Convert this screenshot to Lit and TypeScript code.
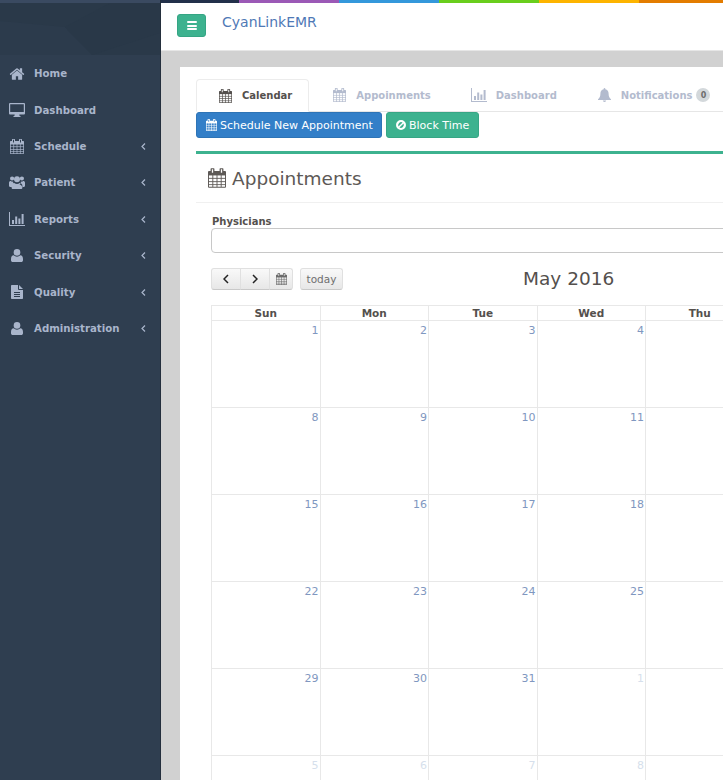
import { LitElement, html, css, svg } from "lit";
import { customElement } from "lit/decorators.js";

const ic = (vb: string, body: unknown, cls = "") =>
  html`<svg class="ic ${cls}" viewBox="${vb}" aria-hidden="true">${body}</svg>`;

const calendar = (cls = "") =>
  ic(
    "0 0 28 30",
    svg`<path d="M5 0h4a1 1 0 0 1 1 1v3h8V1a1 1 0 0 1 1-1h4a1 1 0 0 1 1 1v3h2.500A1.500 1.500 0 0 1 28 5.500v23a1.500 1.500 0 0 1-1.500 1.500h-25A1.500 1.500 0 0 1 0 28.500v-23A1.500 1.500 0 0 1 1.500 4H4V1a1 1 0 0 1 1-1zM6 1.500V7h2V1.500zm14 0V7h2V1.500z" fill-rule="evenodd" />
    <g fill="#fff" class="cells"><rect x="1.500" y="11" width="5.300" height="3.800"/><rect x="8.200" y="11" width="5.100" height="3.800"/><rect x="14.700" y="11" width="5.100" height="3.800"/><rect x="21.200" y="11" width="5.300" height="3.800"/><rect x="1.500" y="16.200" width="5.300" height="3.800"/><rect x="8.200" y="16.200" width="5.100" height="3.800"/><rect x="14.700" y="16.200" width="5.100" height="3.800"/><rect x="21.200" y="16.200" width="5.300" height="3.800"/><rect x="1.500" y="21.400" width="5.300" height="3.300"/><rect x="8.200" y="21.400" width="5.100" height="3.300"/><rect x="14.700" y="21.400" width="5.100" height="3.300"/><rect x="21.200" y="21.400" width="5.300" height="3.300"/><rect x="1.500" y="26" width="5.300" height="2.600"/><rect x="8.200" y="26" width="5.100" height="2.600"/><rect x="14.700" y="26" width="5.100" height="2.600"/><rect x="21.200" y="26" width="5.300" height="2.600"/></g>`,
    cls
  );
const chart = (cls = "") =>
  ic(
    "0 0 16 14",
    svg`<path d="M0 0h1v13h15v1H0zM3 8h2v4H3zM6.200 4.500h2V12h-2zM9.400 6.500h2V12h-2zM12.600 2h2v10h-2z"/>`,
    cls
  );
const home = () =>
  ic(
    "0 0 1792 1792",
    svg`<path d="M1472 992v480q0 26-19 45t-45 19h-384v-384H768v384H384q-26 0-45-19t-19-45V992q0-1 .5-3t.5-3l575-474 575 474q1 2 1 6zm223-69l-62 74q-8 9-21 11h-3q-13 0-21-7L896 424l-692 577q-12 8-24 7-13-2-21-11l-62-74q-8-10-7-23.5T101 878l719-599q32-26 76-26t76 26l244 204V288q0-14 9-23t23-9h192q14 0 23 9t9 23v408l219 182q10 8 11 21.5t-7 23.5z"/>`,
    "i-home"
  );
const desktop = () =>
  ic(
    "0 0 16 14",
    svg`<path fill-rule="evenodd" d="M1 0h14a1 1 0 0 1 1 1v9.500a1 1 0 0 1-1 1h-4.700l.3 1.400h.9v1H4.500v-1h.9l.3-1.400H1a1 1 0 0 1-1-1V1a1 1 0 0 1 1-1zm.2 1.200V9h13.600V1.200z"/>`,
    "i-desk"
  );
const users = () =>
  ic(
    "0 0 16 13",
    svg`<circle cx="3.100" cy="2.500" r="2.100"/><circle cx="12.900" cy="2.500" r="2.100"/><circle cx="8" cy="3.300" r="3"/><path d="M0 6.800C0 5.500.8 5 1.700 5c.6.600 1.500.900 2.400.6-.1 1.300.5 2.300 1.500 3-1.400.3-2.400 1.200-2.800 2.400H1.100C.4 11 0 10.500 0 9.800zM16 6.800c0-1.300-.8-1.800-1.700-1.800-.6.600-1.500.900-2.400.6.100 1.300-.5 2.300-1.500 3 1.400.3 2.400 1.200 2.800 2.400h1.700c.7 0 1.100-.5 1.100-1.200zM5.300 7c.7.700 1.700 1.100 2.700 1.100S10 7.700 10.700 7c1.700.1 2.700 1.300 2.700 3.100v1.300c0 .9-.6 1.600-1.500 1.600H4.100c-.9 0-1.500-.7-1.500-1.600v-1.300C2.600 8.300 3.600 7.100 5.300 7z"/>`,
    "i-users"
  );
const user = () =>
  ic(
    "0 0 12 13",
    svg`<circle cx="6" cy="3.400" r="3.300"/><path d="M2.700 6.300C3.600 7.200 4.700 7.700 6 7.700s2.400-.5 3.300-1.400C11 6.400 12 7.800 12 10v1.200c0 1-.8 1.800-1.800 1.800H1.800C.8 13 0 12.200 0 11.200V10c0-2.200 1-3.600 2.700-3.700z"/>`,
    "i-user"
  );
const file = () =>
  ic(
    "0 0 12 14",
    svg`<path fill-rule="evenodd" d="M.8 0H7v4a1 1 0 0 0 1 1h4v8.200a.8.8 0 0 1-.8.8H.8a.8.8 0 0 1-.8-.8V.8A.8.800 0 0 1 .8 0zM8 0l4 4H8zM3 7v.9h6V7zm0 2v.9h6V9zm0 2v.9h6V11z"/>`,
    "i-file"
  );
const bell = () =>
  ic(
    "0 0 14 15",
    svg`<path d="M7 0c.5 0 .9.400.9.900v.5c2.300.4 3.500 2.200 3.500 4.600 0 3.300 1 4.700 2.600 6.200v.6H0V12.200C1.600 10.700 2.600 9.300 2.600 6c0-2.400 1.200-4.200 3.500-4.600V.9C6.100.4 6.500 0 7 0zM5.200 13.500h3.600A1.800 1.500 0 0 1 7 15a1.800 1.500 0 0 1-1.800-1.500z"/>`,
    "i-bell"
  );
const ban = () =>
  ic(
    "0 0 12 12",
    svg`<path fill-rule="evenodd" d="M6 0a6 6 0 1 1 0 12A6 6 0 0 1 6 0zM2.900 7.900l5-5A3.800 3.800 0 0 0 2.900 7.900zm1.200 1.200a3.800 3.800 0 0 0 5-5z"/>`,
    "i-ban"
  );

const menu = [
  { label: "Home", icon: home, sub: false },
  { label: "Dashboard", icon: desktop, sub: false },
  { label: "Schedule", icon: () => calendar("i-side"), sub: true },
  { label: "Patient", icon: users, sub: true },
  { label: "Reports", icon: () => chart("i-chart"), sub: true },
  { label: "Security", icon: user, sub: true },
  { label: "Quality", icon: file, sub: true },
  { label: "Administration", icon: user, sub: true },
];

const strip = ["#9b59b6", "#3498db", "#69ce1c", "#fdb400", "#e37c00"];

const weeks: [number | "", boolean][][] = [
  [1, 2, 3, 4],
  [8, 9, 10, 11],
  [15, 16, 17, 18],
  [22, 23, 24, 25],
  [29, 30, 31, -1],
  [-5, -6, -7, -8],
].map((w) => [
  ...w.map((d) => [Math.abs(d), d < 0] as [number, boolean]),
  ["", false] as ["", boolean],
]);

@customElement("app-root")
export class AppRoot extends LitElement {
  static styles = css`
    :host {
      display: flex;
      width: 723px;
      height: 780px;
      overflow: hidden;
      font-family: "DejaVu Sans", Verdana, sans-serif;
      background: #d1d1d1;
      color: #54504d;
    }
    * { box-sizing: border-box; }
    .ic { display: block; fill: currentColor; flex: none; }

    /* sidebar */
    .side {
      width: 161px;
      flex: none;
      background: #2f3e50;
      border-right: 1px solid #242f3d;
      display: flex;
      flex-direction: column;
    }
    .side-top { height: 3px; background: #3a4a61; }
    .side-head { height: 52px; flex: none; background: #2a3949; }
    .side-head svg { display: block; width: 160px; height: 52px; }
    .nav { display: flex; flex-direction: column; padding-top: 0.500px; }
    .nav-item {
      height: 36.400px;
      display: flex;
      align-items: center;
      color: #a9b5cb;
      font-size: 10.200px;
      font-weight: 700;
    }
    .nav-slot { width: 34px; flex: none; display: flex; justify-content: center; padding-right: 1px; }
    .nav-label { flex: 1; }
    .caret { margin-right: 14px; width: 5px; height: 7px; fill: none; stroke: #a9b5cb; stroke-width: 1.200; }
    .i-home { width: 16px; height: 16px; }
    .i-desk { width: 16px; height: 14px; }
    .i-side { width: 14px; height: 15px; }
    .i-side .cells { fill: #2f3e50; }
    .i-users { width: 16px; height: 13px; }
    .i-chart { width: 16px; height: 14px; }
    .i-user { width: 12px; height: 13px; }
    .i-file { width: 12px; height: 14px; }

    /* main */
    .main { flex: 1; min-width: 0; display: flex; flex-direction: column; overflow: hidden; }
    .strip { display: flex; height: 3px; flex: none; background: #22304a; padding-left: 78px; }
    .strip span { width: 100px; flex: none; }
    .top {
      height: 48px;
      flex: none;
      background: #fff;
      border-bottom: 1px solid #e6e6e6;
      display: flex;
      align-items: flex-start;
      padding: 11px 0 0 16px;
    }
    .burger {
      width: 29px;
      height: 23px;
      background: #3db28f;
      border: 1px solid #35a584;
      border-radius: 3px;
      display: flex;
      flex-direction: column;
      justify-content: center;
      align-items: center;
      gap: 1.500px;
    }
    .burger i { display: block; width: 10px; height: 2px; background: #fff; border-radius: 1px; }
    .brand { margin: 0 0 0 16px; font-size: 14px; line-height: 16px; color: #4f79b6; }
    .content { flex: 1; padding: 16px 0 0 19px; }
    .panel { width: 800px; background: #fff; min-height: 720px; padding: 12px 16px 0; }

    .tabs { display: flex; height: 33px; border-bottom: 1px solid #e6e6e6; }
    .tab {
      height: 32px;
      display: flex;
      align-items: center;
      padding: 0 15px 0 23px;
      font-size: 10px;
      font-weight: 700;
      white-space: nowrap;
      color: #b3bbce;
      border: 1px solid transparent;
    }
    .tab.on {
      color: #54504d;
      background: #fff;
      border-color: #ececec;
      border-bottom-color: #fff;
      border-radius: 4px 4px 0 0;
      height: 33px;
      padding: 0 16px 0 22px;
    }
    .tab.wide { padding-right: 16px; }
    .tab .ic { width: 13px; height: 14px; margin-right: 10px; }
    .tab .i-chart { width: 16px; height: 14px; margin-right: 9px; }
    .tab .i-bell { width: 13px; height: 14px; }
    .badge {
      width: 14px;
      height: 14px;
      border-radius: 50%;
      background: #d3d8db;
      color: #6d6d6d;
      font-size: 8px;
      font-weight: 700;
      display: flex;
      align-items: center;
      justify-content: center;
      margin-left: 4px;
    }

    .actions { display: flex; gap: 4px; }
    .btn {
      height: 26px;
      display: flex;
      align-items: center;
      gap: 3px;
      border-radius: 3px;
      color: #fff;
      font-size: 11px;
      white-space: nowrap;
    }
    .btn.blue { background: #337fc8; border: 1px solid #2e74b6; padding: 0 9px; width: 186px; }
    .btn.green { background: #3db28f; border: 1px solid #37a685; width: 93px; padding: 0 9px; }
    .btn .ic { width: 11px; height: 12px; }
    .btn .i-ban { width: 10px; height: 10px; }
    .btn.blue .cells { fill: #337fc8; }

    .card { margin-top: 13px; border-top: 3px solid #3db28f; }
    .head {
      height: 49px;
      border-bottom: 1px solid #f0f0f0;
      display: flex;
      align-items: center;
      gap: 6px;
      padding-left: 12px;
      font-size: 18.500px;
      color: #5d5956;
    }
    .head .ic { width: 18px; height: 20px; }
    .body { padding: 0 0 0 15px; }
    .label { display: block; margin: 12px 0 0 1px; font-size: 10px; line-height: 13px; font-weight: 700; }
    .input { height: 25px; border: 1px solid #c8c8c8; border-radius: 4px; background: #fff; }
    .toolbar { display: flex; align-items: center; height: 22px; margin-top: 15px; }
    .fc {
      height: 22px;
      background-image: linear-gradient(#f9f9f9, #e7e7e7);
      border: 1px solid #e0e0e0;
      border-bottom-color: #c9c9c9;
      display: flex;
      align-items: center;
      justify-content: center;
      color: #333;
    }
    .fc svg.arr { width: 6px; height: 10px; fill: none; stroke: #222; stroke-width: 1.500; }
    .fc.prev { width: 30px; border-radius: 3px 0 0 3px; }
    .fc.next { width: 30px; margin-left: -1px; }
    .fc.cal { width: 24px; margin-left: -1px; border-radius: 0 3px 3px 0; color: #6b6b6b; }
    .fc.cal .ic { width: 11px; height: 12px; }
    .fc.cal .cells { fill: #eee; }
    .fc.today { width: 43px; margin-left: 7px; border-radius: 3px; font-size: 10.500px; color: #6f6f6f; }
    .month { margin-left: 180px; font-size: 18.500px; color: #54504d; line-height: 22px; }

    .cal-grid {
      margin-top: 15px;
      display: grid;
      grid-template-columns: repeat(5, 108.500px);
      grid-template-rows: 15px;
      grid-auto-rows: 87px;
      border-top: 1px solid #e8e8e8;
      border-left: 1px solid #e8e8e8;
      width: max-content;
    }
    .dow {
      border-right: 1px solid #e8e8e8;
      border-bottom: 1px solid #e8e8e8;
      text-align: center;
      font-size: 10.500px;
      line-height: 14px;
      font-weight: 700;
      color: #54504d;
    }
    .day {
      border-right: 1px solid #e8e8e8;
      border-bottom: 1px solid #e8e8e8;
      text-align: right;
      padding: 3px 1px 0 0;
      font-size: 11px;
      line-height: 14px;
      color: #7f97c0;
    }
    .day.off { color: #d6dfec; }
  `;

  render() {
    return html`
      <aside class="side">
        <div class="side-top"></div>
        <div class="side-head">
          <svg viewBox="0 0 160 52" aria-hidden="true">
            <path d="M0 18 65 24 92 52H0z" fill="#2c3b4c" />
            <path d="M65 24 110 0h50v30L92 52z" fill="#293848" />
          </svg>
        </div>
        <nav class="nav">
          ${menu.map(
            (m) => html`<div class="nav-item">
              <span class="nav-slot">${m.icon()}</span>
              <span class="nav-label">${m.label}</span>
              ${m.sub
                ? html`<svg class="caret" viewBox="0 0 5 7"><path d="M4 .5 1 3.500 4 6.500" /></svg>`
                : ""}
            </div>`
          )}
        </nav>
      </aside>
      <div class="main">
        <div class="strip">
          ${strip.map((c) => html`<span style="background:${c}"></span>`)}
        </div>
        <header class="top">
          <div class="burger"><i></i><i></i><i></i></div>
          <div class="brand">CyanLinkEMR</div>
        </header>
        <div class="content">
          <div class="panel">
            <div class="tabs">
              <div class="tab on">${calendar()}Calendar</div>
              <div class="tab">${calendar()}Appoinments</div>
              <div class="tab wide">${chart("i-chart")}Dashboard</div>
              <div class="tab">${bell()}Notifications<span class="badge">0</span></div>
            </div>
            <div class="actions">
              <div class="btn blue">${calendar()}Schedule New Appointment</div>
              <div class="btn green">${ban()}Block Time</div>
            </div>
            <div class="card">
              <div class="head">${calendar()}Appointments</div>
              <div class="body">
                <label class="label">Physicians</label>
                <div class="input"></div>
                <div class="toolbar">
                  <div class="fc prev"><svg class="arr" viewBox="0 0 6 10"><path d="M5 1 1 5 5 9" /></svg></div>
                  <div class="fc next"><svg class="arr" viewBox="0 0 6 10"><path d="M1 1 5 5 1 9" /></svg></div>
                  <div class="fc cal">${calendar()}</div>
                  <div class="fc today">today</div>
                  <div class="month">May 2016</div>
                </div>
                <div class="cal-grid">
                  ${["Sun", "Mon", "Tue", "Wed", "Thu"].map(
                    (d) => html`<div class="dow">${d}</div>`
                  )}
                  ${weeks.flat().map(
                    ([d, off]) => html`<div class="day ${off ? "off" : ""}">${d}</div>`
                  )}
                </div>
              </div>
            </div>
          </div>
        </div>
      </div>
    `;
  }
}
